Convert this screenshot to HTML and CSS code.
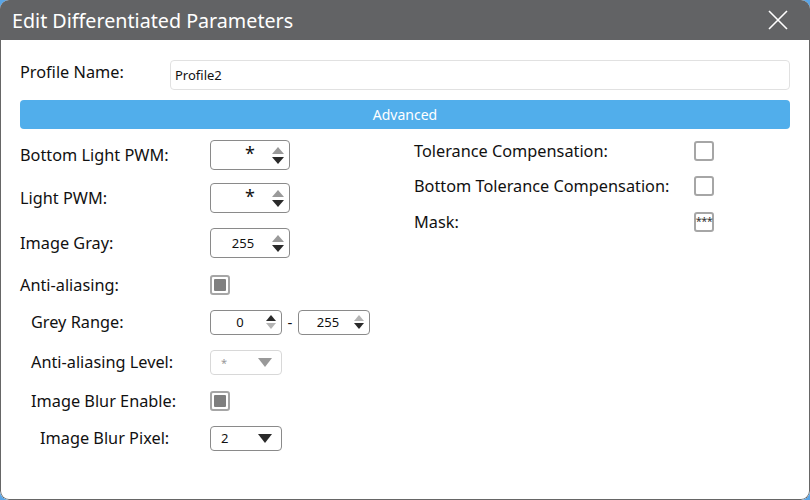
FILE: index.html
```html
<!DOCTYPE html>
<html>
<head>
<meta charset="utf-8">
<link rel="stylesheet" href="styles.css">
</head>
<body>
<div class="window">
  <div class="titlebar">
    <span class="title">Edit Differentiated Parameters</span>
    <svg class="close" width="20" height="20" viewBox="0 0 20 20"><path d="M1 1 L19 19 M19 1 L1 19" stroke="#fff" stroke-width="1.6" fill="none"/></svg>
  </div>
  <div class="content">
    <div class="profile-row">
      <span class="label">Profile Name:</span>
      <div class="text-input">Profile2</div>
    </div>
    <div class="advanced">Advanced</div>
    <div class="columns">
      <div class="col-left">
        <div class="row r1">
          <span class="label">Bottom Light PWM:</span>
          <div class="spin w80"><span class="val star">*</span>
            <span class="arrows"><i class="up gray"></i><i class="down dark"></i></span></div>
        </div>
        <div class="row r2">
          <span class="label">Light PWM:</span>
          <div class="spin w80"><span class="val star">*</span>
            <span class="arrows"><i class="up gray"></i><i class="down dark"></i></span></div>
        </div>
        <div class="row r3">
          <span class="label">Image Gray:</span>
          <div class="spin w80"><span class="val">255</span>
            <span class="arrows"><i class="up gray"></i><i class="down dark"></i></span></div>
        </div>
        <div class="row r4">
          <span class="label">Anti-aliasing:</span>
          <div class="check filled"><span></span></div>
        </div>
        <div class="row r5 small">
          <span class="label ind1">Grey Range:</span>
          <div class="range">
            <div class="spin w72"><span class="val">0</span>
              <span class="arrows"><i class="up dark"></i><i class="down light"></i></span></div>
            <span class="dash">-</span>
            <div class="spin w72"><span class="val">255</span>
              <span class="arrows"><i class="up light"></i><i class="down dark"></i></span></div>
          </div>
        </div>
        <div class="row r6 small">
          <span class="label ind1">Anti-aliasing Level:</span>
          <div class="combo disabled"><span class="cval">*</span><i class="tri"></i></div>
        </div>
        <div class="row r7 small">
          <span class="label ind1">Image Blur Enable:</span>
          <div class="check filled"><span></span></div>
        </div>
        <div class="row r8 small">
          <span class="label ind2">Image Blur Pixel:</span>
          <div class="combo"><span class="cval">2</span><i class="tri"></i></div>
        </div>
      </div>
      <div class="col-right">
        <div class="row rr1">
          <span class="label wide">Tolerance Compensation:</span>
          <div class="check"></div>
        </div>
        <div class="row rr2">
          <span class="label wide">Bottom Tolerance Compensation:</span>
          <div class="check"></div>
        </div>
        <div class="row rr3">
          <span class="label wide">Mask:</span>
          <div class="check mask">***</div>
        </div>
      </div>
    </div>
  </div>
</div>
</body>
</html>
```

FILE: styles.css
```css
html, body {
  margin: 0;
  padding: 0;
  background: #5aa5e6;
}
body {
  width: 810px;
  height: 500px;
  font-family: "Noto Sans", "Open Sans", sans-serif;
  color: #111;
}
.window {
  width: 810px;
  height: 500px;
  border-radius: 9px;
  overflow: hidden;
  background: #fff;
  display: flex;
  flex-direction: column;
}
.titlebar {
  height: 40px;
  flex: none;
  background: #626365;
  display: flex;
  align-items: center;
  justify-content: space-between;
  padding: 0 22px 0 12px;
}
.title {
  color: #fff;
  font-size: 19.7px;
}
.close {
  display: block;
}
.content {
  flex: 1;
  border: 1px solid #666;
  border-top: none;
  border-radius: 0 0 9px 9px;
  padding: 20px 19px 0 19px;
}
.label {
  font-size: 16.3px;
  line-height: 20px;
  white-space: nowrap;
}
.profile-row {
  display: flex;
  align-items: center;
  height: 30px;
}
.profile-row .label {
  width: 150px;
  margin-top: -6px;
}
.text-input {
  flex: 1;
  height: 28px;
  border: 1px solid #e1e1e1;
  border-radius: 4px;
  font-size: 13px;
  line-height: 28px;
  padding-left: 4px;
}
.advanced {
  margin-top: 10px;
  height: 29px;
  background: #51aeeb;
  border-radius: 4px;
  color: #fff;
  font-size: 14px;
  line-height: 29px;
  text-align: center;
}
.columns {
  display: grid;
  grid-template-columns: 394px 1fr;
}
.row {
  display: flex;
  align-items: center;
  height: 30px;
}
.col-left .label {
  width: 190px;
}
.col-left .label.ind1 {
  width: 179px;
  padding-left: 11px;
}
.col-left .label.ind2 {
  width: 170px;
  padding-left: 20px;
}
.r1 { margin-top: 11px; }
.r2 { margin-top: 13px; }
.r3 { margin-top: 15px; }
.r4 { margin-top: 12px; }
.r5 { margin-top: 7px; }
.r6 { margin-top: 10px; }
.r7 { margin-top: 9px; }
.r8 { margin-top: 7px; }
.rr1 { margin-top: 7px; }
.rr2 { margin-top: 5px; }
.rr3 { margin-top: 6px; }
.col-right .label.wide {
  width: 280px;
}
.spin {
  box-sizing: border-box;
  height: 30px;
  border: 1px solid #8a8a8a;
  border-radius: 4px;
  display: flex;
  align-items: center;
  position: relative;
}
.spin.w80 { width: 80px; }
.small .spin { height: 25px; }
.spin.w72 { width: 72px; }
.val {
  flex: 1;
  text-align: center;
  font-size: 13px;
  padding-left: 6px;
}
.star {
  font-size: 18px;
  font-weight: normal;
  line-height: 19px;
  margin-top: -4px;
  padding-left: 20px;
}
.arrows {
  width: 18px;
  display: flex;
  flex-direction: column;
  align-items: center;
  gap: 3px;
  margin-right: 2px;
}
.arrows i {
  display: block;
  width: 0;
  height: 0;
  border-left: 6px solid transparent;
  border-right: 6px solid transparent;
}
.small .arrows i {
  border-left-width: 5px;
  border-right-width: 5px;
}
.small .arrows { gap: 2px; width: 16px; }
.arrows i.up { border-bottom: 7px solid #999; }
.arrows i.down { border-top: 7px solid #999; }
.small .arrows i.up { border-bottom-width: 6px; }
.small .arrows i.down { border-top-width: 6px; }
.arrows i.up.dark { border-bottom-color: #2a2a2a; }
.arrows i.down.dark { border-top-color: #2a2a2a; }
.arrows i.up.gray { border-bottom-color: #9a9a9a; }
.arrows i.up.light { border-bottom-color: #b4b4b4; }
.arrows i.down.light { border-top-color: #b4b4b4; }
.range {
  display: flex;
  align-items: center;
}
.dash {
  width: 16px;
  text-align: center;
  font-size: 15px;
}
.check {
  box-sizing: border-box;
  width: 20px;
  height: 20px;
  border: 2px solid #a6a6a6;
  border-radius: 3px;
  display: flex;
  align-items: center;
  justify-content: center;
}
.check.filled span {
  display: block;
  width: 12px;
  height: 12px;
  background: #7f7f7f;
  border-radius: 1px;
}
.check.mask {
  font-size: 11px;
  line-height: 10px;
  color: #333;
  align-items: flex-start;
  padding-top: 2px;
  letter-spacing: -0.5px;
}
.combo {
  box-sizing: border-box;
  width: 72px;
  height: 25px;
  border: 1px solid #8a8a8a;
  border-radius: 4px;
  display: flex;
  align-items: center;
  justify-content: space-between;
  padding: 0 9px 0 10px;
}
.cval {
  font-size: 13px;
}
.tri {
  display: block;
  width: 0;
  height: 0;
  border-left: 7px solid transparent;
  border-right: 7px solid transparent;
  border-top: 9px solid #2a2a2a;
}
.combo.disabled {
  border-color: #d8d8d8;
}
.combo.disabled .cval {
  color: #999;
  font-size: 11px;
}
.combo.disabled .tri {
  border-top-color: #999;
}
```
